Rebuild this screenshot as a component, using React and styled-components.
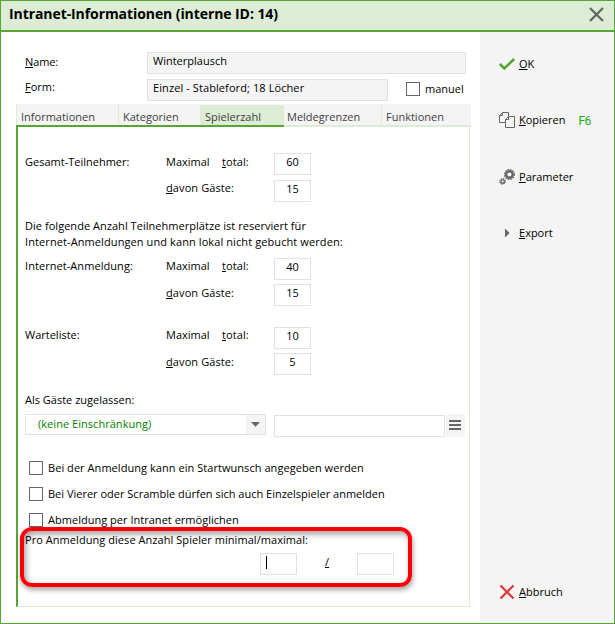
import React from 'react';
import styled, { createGlobalStyle } from 'styled-components';

const GlobalStyle = createGlobalStyle`
  * {
    box-sizing: border-box;
  }
  body {
    margin: 0;
    background: #fff;
    font-family: 'Open Sans', 'Noto Sans', sans-serif;
    font-size: 11px;
    line-height: 16px;
    color: #000;
  }
`;

const Window = styled.div`
  display: flex;
  flex-direction: column;
  width: 615px;
  height: 624px;
  border: 1px solid #57a533;
  background: #fff;
`;

const TitleBar = styled.header`
  display: flex;
  justify-content: space-between;
  align-items: flex-start;
  height: 31px;
  padding: 4px 10px 0 8px;
  border-bottom: 2px solid #57a533;
  background: #dcecd5;
`;

const Title = styled.h1`
  margin: 0;
  font-size: 14px;
  font-weight: 700;
  line-height: 18px;
  letter-spacing: -0.08px;
`;

const Body = styled.div`
  display: flex;
  flex: 1;
`;

const Main = styled.main`
  width: 479px;
  padding: 20px 0 0 15px;
`;

const Side = styled.aside`
  display: flex;
  flex-direction: column;
  flex: 1;
  padding: 24px 0 0 19px;
  background: #f4f4f4;
`;

const Text = styled.span`
  white-space: pre;
  letter-spacing: ${props => props.$ls || 0}px;
  padding-top: ${props => props.$top || 0}px;
`;

const Key = styled.span`
  text-decoration: underline;
  text-decoration-thickness: 1px;
  text-underline-offset: 1px;
  text-decoration-skip-ink: none;
`;

const HeadRow = styled.div`
  display: grid;
  grid-template-columns: 122px auto 1fr;
  height: 22px;
  margin-bottom: ${props => props.$gap}px;
  padding-left: 9px;
`;

const Field = styled.div`
  width: ${props => props.$w || 37}px;
  height: 22px;
  padding: 0 5px;
  border: 1px solid #e1e1e1;
  background: ${props => (props.$readonly ? '#f4f4f4' : '#fff')};
  text-align: ${props => (props.$readonly ? 'left' : 'center')};
`;

const Manual = styled.label`
  display: flex;
  gap: 5px;
  padding: 3px 0 0 18px;
`;

const Box = styled.span`
  flex: none;
  width: 14px;
  height: 14px;
  border: 1px solid #666;
  background: #fff;
`;

const Tabs = styled.nav`
  display: flex;
  width: 455px;
  height: 21px;
  background: #f4f4f4;
`;

const Tab = styled.div`
  width: ${props => props.$w}px;
  margin-top: 1px;
  padding: 4px 0 0 ${props => (props.$plain ? 3 : 4)}px;
  border-left: ${props => (props.$plain ? 0 : 1)}px solid #dcecd5;
  background: ${props => (props.$active ? '#dcecd5' : 'transparent')};
  color: #3f3f3f;
`;

const TabLine = styled.div`
  width: 455px;
  height: 2px;
  background: linear-gradient(to right, #57a533 268px, #dcecd5 268px);
`;

const Panel = styled.section`
  display: flex;
  flex-direction: column;
  width: 454px;
  height: 480px;
  padding: 26px 0 0 7px;
  border-left: 2px solid #57a533;
  border-right: 1px solid #dcecd5;
  border-bottom: 1px solid #dcecd5;
`;

const LimitRow = styled.div`
  display: grid;
  grid-template-columns: 141px 56px 52px 37px;
  height: 22px;
  margin-bottom: ${props => props.$gap}px;
`;

const GuestLabel = styled(Text)`
  grid-column: 2 / 4;
`;

const Note = styled.div`
  display: flex;
  flex-direction: column;
  height: 40px;
`;

const GuestRow = styled.div`
  display: flex;
  align-items: flex-start;
  height: 23px;
  margin: 6px 0 24px;
`;

const Select = styled.div`
  display: flex;
  justify-content: space-between;
  width: 241px;
  height: 21px;
  margin-right: 8px;
  padding-left: 12px;
  border: 1px solid #e1e1e1;
  color: #008000;
`;

const SelectButton = styled.span`
  display: flex;
  justify-content: center;
  width: 19px;
  padding-top: 7px;
  background: #f4f4f4;
`;

const MenuButton = styled.div`
  display: flex;
  flex-direction: column;
  gap: 2px;
  width: 19px;
  height: 23px;
  margin-left: 1px;
  padding: 6px 0 0 3px;
  background: #f4f4f4;

  i {
    width: 12px;
    height: 2px;
    background: #666;
  }
`;

const FilterField = styled(Field)`
  margin-top: 1px;
`;

const CheckRow = styled.label`
  display: flex;
  gap: 5px;
  height: 26px;
  padding-left: 4px;
`;

const CheckText = styled(Text)`
  margin-top: -1px;
`;

const PerEntry = styled.div`
  position: relative;
  display: flex;
  flex-direction: column;
  margin-top: -7px;
`;

const PerEntryFields = styled.div`
  display: flex;
  justify-content: space-between;
  width: 134px;
  margin: 5px 0 0 235px;
`;

const Caret = styled.span`
  display: block;
  width: 1px;
  height: 13px;
  margin-top: 2px;
  background: #000;
`;

const Highlight = styled.div`
  position: absolute;
  left: -5px;
  top: -5px;
  width: 392px;
  height: 60px;
  border: 4px solid #fb0007;
  border-radius: 12px;
  box-shadow: 1px 3px 5px rgba(0, 0, 0, 0.35), inset 2px 3px 6px rgba(0, 0, 0, 0.38);
`;

const Action = styled.div`
  display: flex;
  align-items: flex-start;
  height: 16px;
  margin-bottom: ${props => props.$gap || 0}px;

  svg {
    flex: none;
    margin-right: 4px;
  }
`;

const Shortcut = styled.span`
  margin-left: 13px;
  font-family: Roboto, sans-serif;
  font-size: 12px;
  line-height: 18px;
  letter-spacing: -0.7px;
  color: #1aaa1a;
`;

const Cancel = styled(Action)`
  margin-top: auto;
  margin-bottom: 23px;
`;

const CloseSvg = styled.svg`
  margin-top: 2px;
`;

const CloseIcon = () => (
  <CloseSvg width="15" height="15" viewBox="0 0 15 15">
    <path d="M1 1L14 14M14 1L1 14" stroke="#666" strokeWidth="2.3" fill="none" />
  </CloseSvg>
);

const CheckIcon = () => (
  <svg width="16" height="16" viewBox="0 0 16 16">
    <path d="M0.8 8L5.3 12.4L15.2 3" stroke="#57a533" strokeWidth="2.7" fill="none" />
  </svg>
);

const CopyIcon = () => (
  <svg width="16" height="16" viewBox="0 0 16 16" fill="#f4f4f4" stroke="#666">
    <path d="M3.5 0.5H9.5V10.5H0.5V3.5ZM3.5 0.5V3.5H0.5" />
    <path d="M9.5 4.5H15.5V15.5H6.5V7.5ZM9.5 4.5V7.5H6.5" />
  </svg>
);

const GearIcon = () => (
  <svg width="16" height="16" viewBox="0 0 16 16" fill="none" stroke="#666">
    <circle cx="10.4" cy="5.5" r="3.3" strokeWidth="2.4" />
    <circle cx="10.4" cy="5.5" r="4.9" strokeWidth="1.4" strokeDasharray="1.54 1.025" />
    <circle cx="3.6" cy="12.4" r="1.8" strokeWidth="1.4" />
    <circle cx="3.6" cy="12.4" r="2.8" strokeWidth="1.1" strokeDasharray="1.2 0.999" />
  </svg>
);

const ExportIcon = () => (
  <svg width="16" height="16" viewBox="0 0 16 16">
    <path d="M6 3.5V12.5L10.6 8Z" fill="#666" />
  </svg>
);

const CancelIcon = () => (
  <svg width="16" height="16" viewBox="0 0 16 16">
    <path d="M1.5 1.5L14.5 14.5M14.5 1.5L1.5 14.5" stroke="#df3434" strokeWidth="2.2" />
  </svg>
);

const Limits = ({ name, total, guests, top, guestTop, gap, guestGap, ls }) => (
  <>
    <LimitRow $gap={gap}>
      <Text $top={top} $ls={ls}>{name}</Text>
      <Text $top={top}>Maximal</Text>
      <Text $top={top} $ls={0.1}><Key>t</Key>otal:</Text>
      <Field>{total}</Field>
    </LimitRow>
    <LimitRow $gap={guestGap}>
      <span />
      <GuestLabel $top={guestTop} $ls={0.1}><Key>d</Key>avon Gäste:</GuestLabel>
      <Field>{guests}</Field>
    </LimitRow>
  </>
);

const App = () => (
  <>
    <GlobalStyle />
    <Window>
      <TitleBar>
        <Title>Intranet-Informationen (interne ID: 14)</Title>
        <CloseIcon />
      </TitleBar>
      <Body>
        <Main>
          <HeadRow $gap={5}>
            <Text $top={2} $ls={-0.1}><Key>N</Key>ame:</Text>
            <Field $readonly $w={319}>Winterplausch</Field>
          </HeadRow>
          <HeadRow $gap={3}>
            <Text><Key>F</Key>orm:</Text>
            <Field $readonly $w={241}><Text $ls={0.09}>Einzel - Stableford; 18 Löcher</Text></Field>
            <Manual>
              <Box />
              <CheckText>manuel</CheckText>
            </Manual>
          </HeadRow>
          <Tabs>
            <Tab $w={102}>Informationen</Tab>
            <Tab $w={82}>Kategorien</Tab>
            <Tab $w={84} $active>Spielerzahl</Tab>
            <Tab $w={97} $plain>Meldegrenzen</Tab>
            <Tab $w={90}>Funktionen</Tab>
          </Tabs>
          <TabLine />
          <Panel>
            <Limits name="Gesamt-Teilnehmer:" total="60" guests="15" top={1} guestTop={0} gap={5} guestGap={16} />
            <Note>
              <Text $ls={0.035}>Die folgende Anzahl Teilnehmerplätze ist reserviert für</Text>
              <Text $ls={0.095}>Internet-Anmeldungen und kann lokal nicht gebucht werden:</Text>
            </Note>
            <Limits name="Internet-Anmeldung:" total="40" guests="15" top={0} guestTop={1} gap={4} guestGap={21} ls={0.06} />
            <Limits name="Warteliste:" total="10" guests="5" top={0} guestTop={1} gap={4} guestGap={17} />
            <Text>Als Gäste zugelassen:</Text>
            <GuestRow>
              <Select>
                <Text $top={1} $ls={0.04}>(keine Einschränkung)</Text>
                <SelectButton>
                  <svg width="9" height="5" viewBox="0 0 9 5">
                    <path d="M0 0H9L4.5 4.7Z" fill="#666" />
                  </svg>
                </SelectButton>
              </Select>
              <FilterField $w={171} />
              <MenuButton><i /><i /><i /></MenuButton>
            </GuestRow>
            <CheckRow>
              <Box />
              <CheckText $ls={0.05}>Bei der Anmeldung kann ein Startwunsch angegeben werden</CheckText>
            </CheckRow>
            <CheckRow>
              <Box />
              <CheckText>Bei Vierer oder Scramble dürfen sich auch Einzelspieler anmelden</CheckText>
            </CheckRow>
            <CheckRow>
              <Box />
              <CheckText $ls={0.02}>Abmeldung per Intranet ermöglichen</CheckText>
            </CheckRow>
            <PerEntry>
              <Highlight />
              <Text $ls={0.055}>Pro Anmeldung diese Anzahl Spieler minimal/maximal:</Text>
              <PerEntryFields>
                <Field><Caret /></Field>
                <Text $top={1}><Key>/</Key></Text>
                <Field />
              </PerEntryFields>
            </PerEntry>
          </Panel>
        </Main>
        <Side>
          <Action $gap={40}>
            <CheckIcon />
            <Text><Key>O</Key>K</Text>
          </Action>
          <Action $gap={41}>
            <CopyIcon />
            <Text><Key>K</Key>opieren</Text>
            <Shortcut>F6</Shortcut>
          </Action>
          <Action $gap={40}>
            <GearIcon />
            <Text><Key>P</Key>arameter</Text>
          </Action>
          <Action>
            <ExportIcon />
            <Text><Key>E</Key>xport</Text>
          </Action>
          <Cancel>
            <CancelIcon />
            <Text><Key>A</Key>bbruch</Text>
          </Cancel>
        </Side>
      </Body>
    </Window>
  </>
);

export default App;
